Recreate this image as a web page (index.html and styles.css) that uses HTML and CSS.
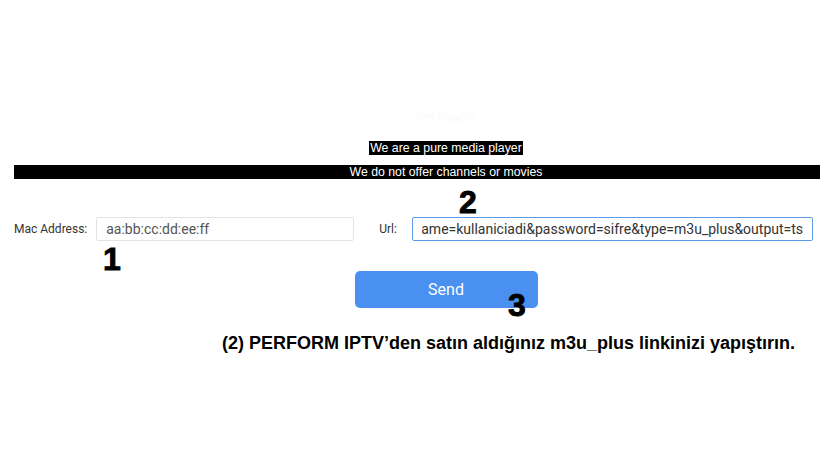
FILE: index.html
```html
<!DOCTYPE html>
<html lang="tr">
<head>
<meta charset="utf-8">
<title>Media Player</title>
<link rel="stylesheet" href="styles.css">
</head>
<body>
<div class="page">
  <div class="ghost centered">Set Playlist</div>
  <div class="notice centered"><span class="notice-text">We are a pure media player</span></div>
  <div class="bar centered">We do not offer channels or movies</div>
  <div class="stage">
    <form class="form-row" onsubmit="return false">
      <label class="label label-mac" for="mac">Mac Address:</label>
      <input class="field field-mac" id="mac" type="text" value="aa:bb:cc:dd:ee:ff">
      <label class="label label-url" for="url">Url:</label>
      <input class="field field-url" id="url" type="text" value="http://server.url:8080/get.php?username=kullaniciadi&amp;password=sifre&amp;type=m3u_plus&amp;output=ts">
    </form>
    <div class="actions centered">
      <button class="send" type="button">Send</button>
    </div>
    <span class="step step-1">1</span>
    <span class="step step-2">2</span>
    <span class="step step-3">3</span>
  </div>
  <p class="caption">(2) PERFORM IPTV’den satın aldığınız m3u_plus linkinizi yapıştırın.</p>
</div>
<script src="script.js"></script>
</body>
</html>
```
FILE: styles.css
```css
html, body {
  margin: 0;
  padding: 0;
  background: #ffffff;
  overflow: hidden;
}
body {
  font-family: "Liberation Sans", Arial, sans-serif;
  color: #000;
}
.page {
  width: 806px;
  margin-left: 14px;
}
.centered {
  padding-left: 58px;
  text-align: center;
}
.ghost {
  margin-top: 110px;
  height: 14px;
  line-height: 14px;
  font-size: 12px;
  color: #fafafa;
}
.notice {
  margin-top: 17px;
  height: 15px;
  line-height: 15px;
  font-size: 12.3px;
}
.notice-text {
  background: #000;
  color: #fff;
  padding: 0 1px;
}
.bar {
  margin-top: 9px;
  height: 14px;
  line-height: 14px;
  background: #000;
  color: #fff;
  font-size: 12.3px;
}
.stage {
  position: relative;
  padding-top: 38px;
}
.form-row {
  display: flex;
  align-items: center;
  margin: 0;
  font-family: Roboto, "Liberation Sans", sans-serif;
}
.label {
  font-size: 12px;
  color: #333;
}
.field {
  box-sizing: border-box;
  height: 24px;
  border: 1px solid #e3e3e3;
  border-radius: 2px;
  padding: 0 9px;
  font-family: Roboto, "Liberation Sans", sans-serif;
  font-size: 14px;
  color: #555;
  background: #fff;
  outline: none;
}
.field-mac {
  margin-left: 9px;
  width: 258px;
}
.label-url {
  margin-left: 25px;
}
.field-url {
  margin-left: 15px;
  width: 401px;
  border-color: #5b9be8;
  color: #333;
}
.actions {
  display: flex;
  justify-content: center;
  margin-top: 30px;
}
.send {
  width: 183px;
  height: 37px;
  border: none;
  border-radius: 5px;
  background: #4a90f0;
  color: #fff;
  font-family: Roboto, "Liberation Sans", sans-serif;
  font-size: 16px;
  cursor: pointer;
}
.step {
  position: absolute;
  font-family: "Liberation Sans", Arial, sans-serif;
  font-weight: bold;
  font-size: 32px;
  line-height: 32px;
  color: #000;
  -webkit-text-stroke: 0.9px #000;
}
.step-1 { left: 89px; top: 64px; }
.step-2 { left: 445px; top: 7px; }
.step-3 { left: 494px; top: 110px; }
.caption {
  margin: 25px 0 0 208px;
  font-size: 18px;
  line-height: 20px;
  font-weight: bold;
  white-space: nowrap;
}
```
FILE: script.js
```js
var u = document.getElementById('url');
u.scrollLeft = u.scrollWidth;
```
